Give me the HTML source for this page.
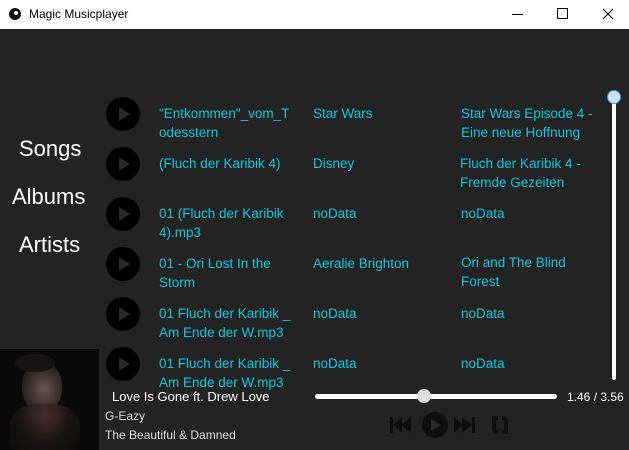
<html><head><style>
body{margin:0;width:629px;height:450px;overflow:hidden;background:#232323;font-family:"Liberation Sans",sans-serif;position:relative}
.tb{position:absolute;left:0;top:0;width:629px;height:29px;background:#fff;font-size:12px;color:#000}
.a{position:absolute}
.c{color:#14c8dc;font-size:13.5px;line-height:19px}
.nav{color:#fff;font-size:22px;position:absolute}
.pb{position:absolute;left:106px;width:34px;height:34px;border-radius:50%;background:#000}
.pb:after{content:"";position:absolute;left:13px;top:10px;border-left:11px solid #2a2a2a;border-top:7px solid transparent;border-bottom:7px solid transparent}
</style></head><body>
<div class="tb">
<div class="a" style="left:9px;top:8px;width:12px;height:12px;border-radius:50%;background:#111"></div>
<div class="a" style="left:14px;top:11px;width:4px;height:4px;border-radius:50%;background:#fff"></div>
<div class="a" style="left:29px;top:7px">Magic Musicplayer</div>
<div class="a" style="left:512px;top:14px;width:11px;height:1px;background:#000"></div>
<div class="a" style="left:557px;top:8px;width:9px;height:9px;border:1px solid #000"></div>
<svg class="a" style="left:602px;top:8px" width="12" height="12"><path d="M1 1L11 11M11 1L1 11" stroke="#000" stroke-width="1"/></svg>
</div>
<div class="nav" style="left:19px;top:136px">Songs</div>
<div class="nav" style="left:12px;top:184px">Albums</div>
<div class="nav" style="left:19px;top:232px">Artists</div>

<div class="pb" style="top:97px"></div><div class="pb" style="top:147px"></div><div class="pb" style="top:197px"></div><div class="pb" style="top:247px"></div><div class="pb" style="top:297px"></div><div class="pb" style="top:347px"></div>

<div class="a c" style="left:159px;top:104px">"Entkommen"_vom_T<br>odesstern</div>
<div class="a c" style="left:313px;top:104px">Star Wars</div>
<div class="a c" style="left:461px;top:104px">Star Wars Episode 4 -<br>Eine neue Hoffnung</div>
<div class="a c" style="left:159px;top:154px">(Fluch der Karibik 4)</div>
<div class="a c" style="left:313px;top:154px">Disney</div>
<div class="a c" style="left:460px;top:154px">Fluch der Karibik 4 -<br>Fremde Gezeiten</div>
<div class="a c" style="left:159px;top:204px">01 (Fluch der Karibik<br>4).mp3</div>
<div class="a c" style="left:313px;top:204px">noData</div>
<div class="a c" style="left:461px;top:204px">noData</div>
<div class="a c" style="left:159px;top:254px">01 - Ori Lost In the<br>Storm</div>
<div class="a c" style="left:313px;top:254px">Aeralie Brighton</div>
<div class="a c" style="left:461px;top:253px">Ori and The Blind<br>Forest</div>
<div class="a c" style="left:159px;top:304px">01 Fluch der Karibik _<br>Am Ende der W.mp3</div>
<div class="a c" style="left:313px;top:304px">noData</div>
<div class="a c" style="left:461px;top:304px">noData</div>
<div class="a c" style="left:159px;top:354px">01 Fluch der Karibik _<br>Am Ende der W.mp3</div>
<div class="a c" style="left:313px;top:354px">noData</div>
<div class="a c" style="left:461px;top:354px">noData</div>

<div class="a" style="left:612px;top:97px;width:4px;height:283px;background:#fff;border-radius:2px"></div>
<div class="a" style="left:607px;top:90px;width:12px;height:12px;border-radius:50%;background:#cfe4f2;border:1px solid #3aa0e0"></div>

<div class="a" style="left:0;top:349px;width:99px;height:101px;background:#0a0a0a;overflow:hidden">
<div class="a" style="left:22px;top:14px;width:40px;height:48px;border-radius:45%;background:radial-gradient(ellipse at 55% 55%,#6a5550 0,#3a2e2c 50%,#0a0a0a 100%)"></div>
<div class="a" style="left:10px;top:55px;width:70px;height:50px;border-radius:40% 40% 0 0;background:radial-gradient(ellipse at 50% 20%,#4a2e2c 0,#1a1414 50%,#0a0a0a 100%)"></div>
<div class="a" style="left:15px;top:5px;width:40px;height:18px;border-radius:50%;background:#151313"></div>
</div>
<div class="a" style="left:112px;top:389px;color:#fff;font-size:13px">Love Is Gone ft. Drew Love</div>
<div class="a" style="left:105px;top:409px;color:#ddd;font-size:12px">G-Eazy</div>
<div class="a" style="left:105px;top:428px;color:#ddd;font-size:12px">The Beautiful &amp; Damned</div>
<div class="a" style="left:315px;top:394px;width:242px;height:5px;background:#fff;border-radius:3px"></div>
<div class="a" style="left:417px;top:389px;width:14px;height:14px;border-radius:50%;background:#ddd"></div>
<div class="a" style="left:567px;top:390px;color:#fff;font-size:12px">1.46 / 3.56</div>
<svg class="a" style="left:388px;top:410px" width="130" height="30" viewBox="0 0 130 30">
<g fill="#0e0e0e"><rect x="2" y="7" width="3" height="16"/><path d="M5 15 L14 7 V23Z M13 15 L23 7 V23Z"/>
<circle cx="47" cy="15" r="13"/><path d="M43 9 L53 15 L43 21Z" fill="#2a2a2a"/>
<path d="M66 7 L75 15 L66 23Z M74 7 L84 15 L74 23Z"/><rect x="84" y="7" width="3" height="16"/></g>
<g fill="none" stroke="#0e0e0e" stroke-width="4"><path d="M110 8 H104 Q106 8 106 12 V18 Q106 22 110 22"/><path d="M114 22 H120 Q118 22 118 18 V12 Q118 8 114 8"/></g>
</svg>
</body></html>
